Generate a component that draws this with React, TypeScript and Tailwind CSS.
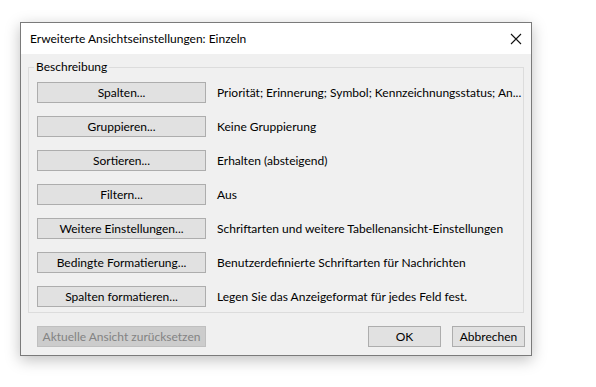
import React from "react";

const rows = [
  { label: "Spalten...", value: "Priorität; Erinnerung; Symbol; Kennzeichnungsstatus; An..." },
  { label: "Gruppieren...", value: "Keine Gruppierung" },
  { label: "Sortieren...", value: "Erhalten (absteigend)" },
  { label: "Filtern...", value: "Aus" },
  { label: "Weitere Einstellungen...", value: "Schriftarten und weitere Tabellenansicht-Einstellungen" },
  { label: "Bedingte Formatierung...", value: "Benutzerdefinierte Schriftarten für Nachrichten" },
  { label: "Spalten formatieren...", value: "Legen Sie das Anzeigeformat für jedes Feld fest." },
];

const DialogButton = ({
  children,
  className = "",
  disabled = false,
}: {
  children: React.ReactNode;
  className?: string;
  disabled?: boolean;
}) => (
  <button
    disabled={disabled}
    className={`flex h-[21px] shrink-0 items-center justify-center whitespace-nowrap border text-[12px] leading-none ${
      disabled ? "border-[#bfbfbf] bg-[#cccccc] text-[#838383]" : "border-[#adadad] bg-[#e1e1e1] text-black"
    } ${className}`}
  >
    {children}
  </button>
);

export default function App() {
  return (
    <div
      className="h-[387px] w-[596px] bg-white pl-5 pt-[22px]"
      style={{ fontFamily: 'Lato, "Noto Sans", sans-serif' }}
    >
      <div className="flex h-[334px] w-[512px] flex-col border border-[#7a7a7a] bg-[#f0f0f0] shadow-[0_4px_14px_rgba(0,0,0,0.25)]">
        {/* Title bar */}
        <div className="flex h-[31px] items-center justify-between bg-white pl-[9px] pr-[8px]">
          <span className="text-[12px] text-black">Erweiterte Ansichtseinstellungen: Einzeln</span>
          <svg width="12" height="12" viewBox="0 0 12 12" className="mr-[1px]">
            <path d="M1 1 L11 11 M11 1 L1 11" stroke="#111" strokeWidth="1.1" />
          </svg>
        </div>

        {/* Group box */}
        <div className="relative mx-[7px] mt-[13px] h-[246px] border border-[#dcdcdc]">
          <span className="absolute -top-[9px] left-[5px] bg-[#f0f0f0] px-[2px] text-[12px] leading-[16px] text-black">
            Beschreibung
          </span>
          <div className="flex flex-col gap-[13px] pl-[8px] pt-[14px]">
            {rows.map((r) => (
              <div key={r.label} className="flex items-center">
                <DialogButton className="w-[169px]">{r.label}</DialogButton>
                <span className="ml-[11px] whitespace-nowrap text-[12px] text-black">{r.value}</span>
              </div>
            ))}
          </div>
        </div>

        {/* Footer */}
        <div className="mt-[13px] flex items-center pl-[16px] pr-[6px]">
          <DialogButton disabled className="w-[169px]">
            Aktuelle Ansicht zurücksetzen
          </DialogButton>
          <div className="ml-auto flex gap-[11px]">
            <DialogButton className="w-[73px]">OK</DialogButton>
            <DialogButton className="w-[73px]">Abbrechen</DialogButton>
          </div>
        </div>
      </div>
    </div>
  );
}
